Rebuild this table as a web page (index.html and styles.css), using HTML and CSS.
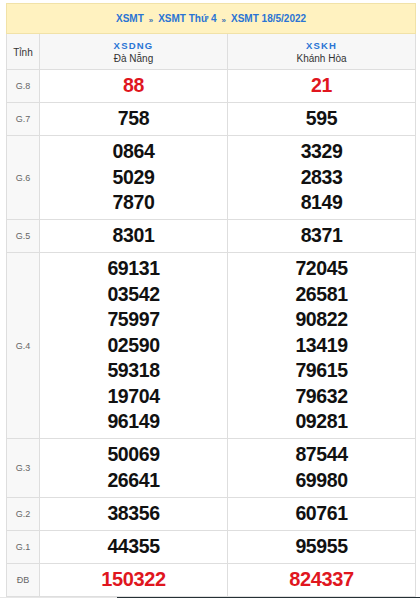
FILE: index.html
```html
<!DOCTYPE html>
<html lang="vi">
<head>
<meta charset="utf-8">
<title>XSMT 18/5/2022</title>
<link rel="stylesheet" href="styles.css">
</head>
<body>
<table class="kq">
  <colgroup><col class="c-label"><col class="c-prov"><col class="c-prov"></colgroup>
  <thead>
    <tr><th colspan="3" class="title"><a href="#">XSMT</a><span class="sep">»</span><a href="#">XSMT Thứ 4</a><span class="sep">»</span><a href="#">XSMT 18/5/2022</a></th></tr>
    <tr class="provs">
      <th class="lbl-h">Tỉnh</th>
      <th><a href="#" class="code">XSDNG</a><span class="pname">Đà Nẵng</span></th>
      <th><a href="#" class="code">XSKH</a><span class="pname">Khánh Hòa</span></th>
    </tr>
  </thead>
  <tbody>
    <tr><td class="lbl">G.8</td><td class="num red">88</td><td class="num red">21</td></tr>
    <tr><td class="lbl">G.7</td><td class="num">758</td><td class="num">595</td></tr>
    <tr><td class="lbl">G.6</td><td class="num"><div>0864</div><div>5029</div><div>7870</div></td><td class="num"><div>3329</div><div>2833</div><div>8149</div></td></tr>
    <tr><td class="lbl">G.5</td><td class="num">8301</td><td class="num">8371</td></tr>
    <tr><td class="lbl">G.4</td><td class="num"><div>69131</div><div>03542</div><div>75997</div><div>02590</div><div>59318</div><div>19704</div><div>96149</div></td><td class="num"><div>72045</div><div>26581</div><div>90822</div><div>13419</div><div>79615</div><div>79632</div><div>09281</div></td></tr>
    <tr><td class="lbl">G.3</td><td class="num"><div>50069</div><div>26641</div></td><td class="num"><div>87544</div><div>69980</div></td></tr>
    <tr><td class="lbl">G.2</td><td class="num">38356</td><td class="num">60761</td></tr>
    <tr><td class="lbl">G.1</td><td class="num">44355</td><td class="num">95955</td></tr>
    <tr><td class="lbl">ĐB</td><td class="num red big">150322</td><td class="num red big">824337</td></tr>
  </tbody>
</table>
<div class="bottom-bar"><div class="bar-light"></div><div class="bar-dark"></div></div>
</body>
</html>
```
FILE: styles.css
```css
html, body { margin: 0; padding: 0; background: #fff; }
body { padding: 3px 5px 0 6px; font-family: "Liberation Sans", Arial, sans-serif; color: #222; }
.kq { width: 409px; border-collapse: collapse; table-layout: fixed; }
.c-label { width: 33px; }
.c-prov { width: 188px; }
.kq th, .kq td { border: 1px solid #dedede; text-align: center; padding: 0; }
.title { background: #fff2c0; border: 1px solid #f1e2a8 !important; height: 29px; font-size: 10px; font-weight: bold; letter-spacing: 0; }
.title a { color: #2a74d4; text-decoration: none; }
.title .sep { color: #3c6fb0; font-size: 8px; margin: 0 5px; position: relative; top: 1px; }
.provs th { background: #f7f7f7; height: 34px; font-weight: normal; font-size: 10px; line-height: 13px; padding-top: 1px; }
.code { display: block; color: #2a74d4; text-decoration: none; font-weight: bold; font-size: 9.5px; letter-spacing: 1.2px; }
.pname { display: block; color: #333; font-size: 10px; }
.lbl-h { color: #333; font-size: 10px; }
.lbl { background: #f8f8f8; color: #666; font-size: 9px; }
.num { font-weight: bold; font-size: 19.5px; letter-spacing: -0.4px; line-height: 25.5px; color: #111; padding: 3px 0 3.5px !important; }
.red { color: #e0161e; }
.big { font-size: 20px; }
.bottom-bar { display: flex; height: 4px; margin: 0 -5px 0 -6px; }
.bar-light { width: 117px; background: #e6e6e6; }
.bar-dark { flex: 1; background: #253035; }
```
